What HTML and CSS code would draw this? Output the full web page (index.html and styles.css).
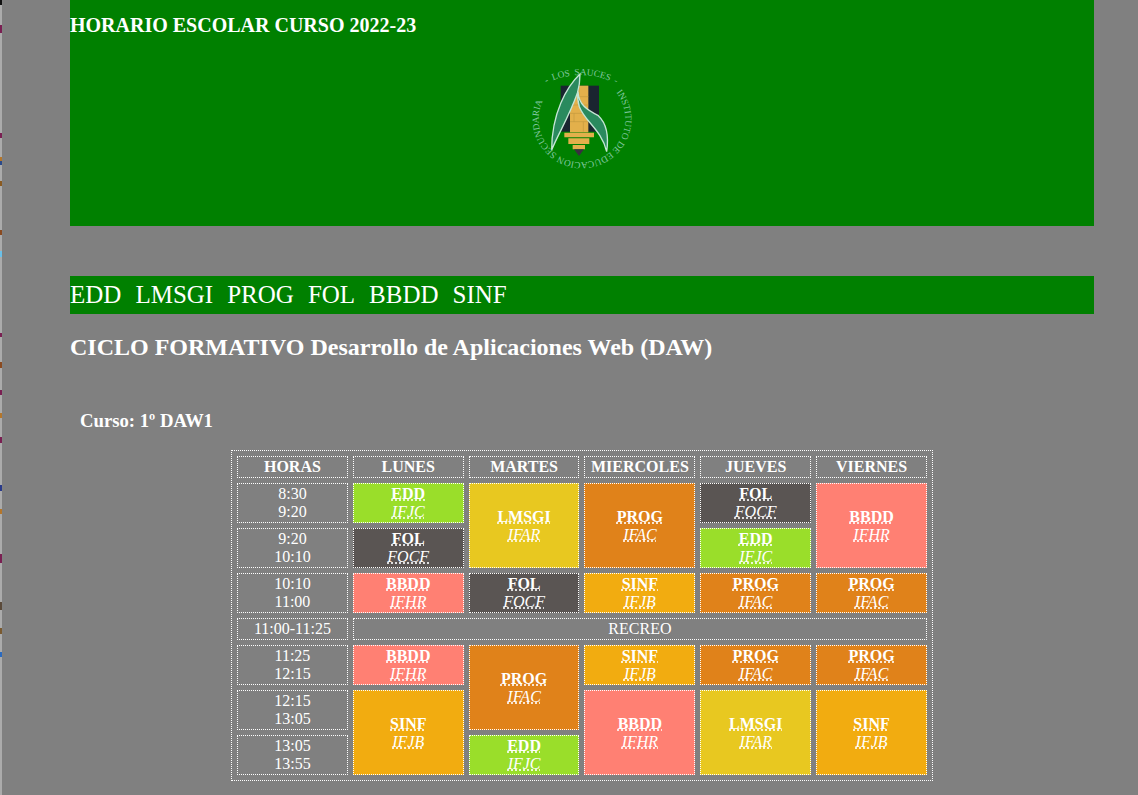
FILE: index.html
```html
<!DOCTYPE html>
<html lang="es">
<head>
<meta charset="utf-8">
<title>Horario escolar</title>
<link rel="stylesheet" href="styles.css">
</head>
<body>
<div class="edge"></div>
<div class="wrap">
<header class="top">
<h3 class="title">HORARIO ESCOLAR CURSO 2022-23</h3>
<svg class="logo" width="125" height="120" viewBox="60 30 375 360" role="img" aria-label="Logo IES Los Sauces">
<defs>
<path id="arc-top" d="M132 104 A225 225 0 0 1 356 106"/>
<path id="arc-bottom" d="M348.400 127 A130 130 0 1 1 137 136"/>
</defs>
<rect x="182" y="107" width="115" height="138" fill="#1a2530"/>
<rect x="210" y="107" width="55" height="140" fill="#e3b04b"/>
<path class="brick" d="M210 140H265M210 165H265M210 190H265M210 215H265M237 107V140M222 190V215M250 215V245"/>
<path d="M193 248H282V262H193ZM205 265H268V282H205ZM218 285H255V298H218Z" fill="#e3b04b"/>
<path d="M222 298H252L237 318Z" fill="#3a3040"/>
<path class="leaf" d="M240 72C200 110 155 190 155 300C175 250 205 205 232 130C238 110 240 90 240 72Z"/>
<path class="leaf" d="M234 125C236 165 262 180 295 197C325 225 325 270 320 305C305 240 255 215 238 170C233 155 232 140 234 125Z"/>
<text class="logo-text logo-top"><textPath href="#arc-top" startOffset="50%" text-anchor="middle">- LOS SAUCES -</textPath></text>
<text class="logo-text"><textPath href="#arc-bottom">INSTITUTO DE EDUCACION SECUNDARIA</textPath></text>
</svg>
</header>
<nav class="menu">
<a href="#edd">EDD</a>
<a href="#lmsgi">LMSGI</a>
<a href="#prog">PROG</a>
<a href="#fol">FOL</a>
<a href="#bbdd">BBDD</a>
<a href="#sinf">SINF</a>
</nav>
<h2 class="cycle">CICLO FORMATIVO Desarrollo de Aplicaciones Web (DAW)</h2>
<h3 class="course">Curso: 1º DAW1</h3>
<table class="timetable">
<tr><th>HORAS</th><th>LUNES</th><th>MARTES</th><th>MIERCOLES</th><th>JUEVES</th><th>VIERNES</th></tr>
<tr>
<td>8:30<br>9:20</td>
<td class="edd"><abbr class="subj" title="Empresa">EDD</abbr><br><abbr class="prof" title="Profesor">IFJC</abbr></td>
<td class="lmsgi" rowspan="2"><abbr class="subj" title="Lenguajes">LMSGI</abbr><br><abbr class="prof" title="Profesor">IFAR</abbr></td>
<td class="prog" rowspan="2"><abbr class="subj" title="Programación">PROG</abbr><br><abbr class="prof" title="Profesor">IFAC</abbr></td>
<td class="fol"><abbr class="subj" title="Formación">FOL</abbr><br><abbr class="prof" title="Profesor">FOCF</abbr></td>
<td class="bbdd" rowspan="2"><abbr class="subj" title="Bases de datos">BBDD</abbr><br><abbr class="prof" title="Profesor">IFHR</abbr></td>
</tr>
<tr>
<td>9:20<br>10:10</td>
<td class="fol"><abbr class="subj" title="Formación">FOL</abbr><br><abbr class="prof" title="Profesor">FOCF</abbr></td>
<td class="edd"><abbr class="subj" title="Empresa">EDD</abbr><br><abbr class="prof" title="Profesor">IFJC</abbr></td>
</tr>
<tr>
<td>10:10<br>11:00</td>
<td class="bbdd"><abbr class="subj" title="Bases de datos">BBDD</abbr><br><abbr class="prof" title="Profesor">IFHR</abbr></td>
<td class="fol"><abbr class="subj" title="Formación">FOL</abbr><br><abbr class="prof" title="Profesor">FOCF</abbr></td>
<td class="sinf"><abbr class="subj" title="Sistemas">SINF</abbr><br><abbr class="prof" title="Profesor">IFJB</abbr></td>
<td class="prog"><abbr class="subj" title="Programación">PROG</abbr><br><abbr class="prof" title="Profesor">IFAC</abbr></td>
<td class="prog"><abbr class="subj" title="Programación">PROG</abbr><br><abbr class="prof" title="Profesor">IFAC</abbr></td>
</tr>
<tr><td>11:00-11:25</td><td colspan="5">RECREO</td></tr>
<tr>
<td>11:25<br>12:15</td>
<td class="bbdd"><abbr class="subj" title="Bases de datos">BBDD</abbr><br><abbr class="prof" title="Profesor">IFHR</abbr></td>
<td class="prog" rowspan="2"><abbr class="subj" title="Programación">PROG</abbr><br><abbr class="prof" title="Profesor">IFAC</abbr></td>
<td class="sinf"><abbr class="subj" title="Sistemas">SINF</abbr><br><abbr class="prof" title="Profesor">IFJB</abbr></td>
<td class="prog"><abbr class="subj" title="Programación">PROG</abbr><br><abbr class="prof" title="Profesor">IFAC</abbr></td>
<td class="prog"><abbr class="subj" title="Programación">PROG</abbr><br><abbr class="prof" title="Profesor">IFAC</abbr></td>
</tr>
<tr>
<td>12:15<br>13:05</td>
<td class="sinf" rowspan="2"><abbr class="subj" title="Sistemas">SINF</abbr><br><abbr class="prof" title="Profesor">IFJB</abbr></td>
<td class="bbdd" rowspan="2"><abbr class="subj" title="Bases de datos">BBDD</abbr><br><abbr class="prof" title="Profesor">IFHR</abbr></td>
<td class="lmsgi" rowspan="2"><abbr class="subj" title="Lenguajes">LMSGI</abbr><br><abbr class="prof" title="Profesor">IFAR</abbr></td>
<td class="sinf" rowspan="2"><abbr class="subj" title="Sistemas">SINF</abbr><br><abbr class="prof" title="Profesor">IFJB</abbr></td>
</tr>
<tr>
<td>13:05<br>13:55</td>
<td class="edd"><abbr class="subj" title="Empresa">EDD</abbr><br><abbr class="prof" title="Profesor">IFJC</abbr></td>
</tr>
</table>
</div>
</body>
</html>
```
FILE: styles.css
```css
html, body { margin: 0; padding: 0; }
body {
  background: #808080;
  color: #fff;
  font-family: "Liberation Serif", "Times New Roman", serif;
  font-size: 16px;
}
.edge {
  position: absolute;
  left: 0;
  top: 0;
  width: 2px;
  height: 795px;
  background: linear-gradient(to bottom,
    #111 0 5px, #ababab 5px 25px, #7a1f52 25px 33px, #ababab 33px 133px,
    #7a1f52 133px 138px, #ababab 138px 157px, #b5762a 157px 161px, #2a4a8a 161px 165px,
    #ababab 165px 181px, #8a5a20 181px 186px, #ababab 186px 230px, #8a4a20 230px 235px,
    #ababab 235px 251px, #6ac0e8 251px 257px, #ababab 257px 333px, #7a1f52 333px 337px,
    #ababab 337px 362px, #8a4a20 362px 368px, #ababab 368px 390px, #7a1f52 390px 395px,
    #ababab 395px 413px, #b5762a 413px 418px, #ababab 418px 437px, #7a1f52 437px 443px,
    #ababab 443px 485px, #2a3a8a 485px 491px, #ababab 491px 509px, #b5762a 509px 514px,
    #ababab 514px 554px, #7a1f52 554px 563px, #ababab 563px 602px, #5a4a3a 602px 610px,
    #ababab 610px 628px, #7a5a30 628px 634px, #ababab 634px 652px, #2a6ac0 652px 657px,
    #ababab 657px);
}
.wrap { width: 1024px; margin-left: 70px; }
.top {
  background: #008000;
  height: 226px;
  display: flex;
  flex-direction: column;
  align-items: center;
}
.title {
  align-self: flex-start;
  margin: 0;
  padding-top: 14px;
  font-size: 20px;
  line-height: 23px;
  font-weight: bold;
}
.logo { margin-top: 23px; }
.logo-text { font-size: 28px; fill: #82c8a0; }
.logo-top { word-spacing: 6px; }
.brick { fill: none; stroke: #c39a3f; stroke-width: 2; }
.leaf { fill: #2a8a5e; stroke: #c5e6d5; stroke-width: 4; }
.menu {
  margin-top: 50px;
  background: #008000;
  height: 38px;
  line-height: 38px;
  font-size: 25px;
  display: flex;
  gap: 14px;
}
.menu a { color: #fff; text-decoration: none; }
.cycle { margin: 20px 0 0; font-size: 24px; font-weight: bold; line-height: 27px; }
.course { margin: 49px 0 0 10px; font-size: 18.72px; font-weight: bold; line-height: 21px; }
.timetable {
  margin: 19px auto 0;
  width: 702px;
  table-layout: fixed;
  border: 1px dotted #fff;
  border-spacing: 5px;
}
.timetable th, .timetable td {
  border: 1px dotted #fff;
  padding: 1px;
  text-align: center;
}
.timetable abbr { text-decoration: underline dotted; }
.subj { font-weight: bold; }
.prof { font-style: italic; }
.edd { background: #9ade2a; }
.lmsgi { background: #e8c820; }
.prog { background: #e0821a; }
.fol { background: #5a5553; }
.bbdd { background: #ff8073; }
.sinf { background: #f2ac10; }
```
